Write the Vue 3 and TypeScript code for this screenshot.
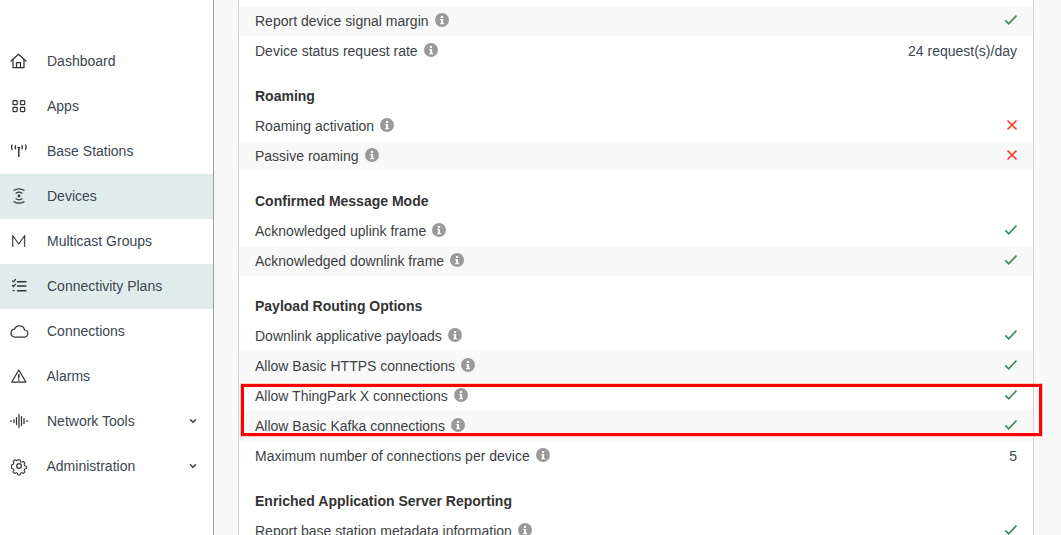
<script setup lang="ts">
interface NavItem { label: string; icon: string; active?: boolean; chevron?: boolean; tight?: boolean }
type Row = { label: string; value?: string; status?: 'ok' | 'no' }
interface Section { title?: string; rows: Row[] }

const nav: NavItem[] = [
  { label: 'Dashboard', icon: 'home' },
  { label: 'Apps', icon: 'apps' },
  { label: 'Base Stations', icon: 'antenna' },
  { label: 'Devices', icon: 'device', active: true },
  { label: 'Multicast Groups', icon: 'multicast' },
  { label: 'Connectivity Plans', icon: 'plans', active: true },
  { label: 'Connections', icon: 'cloud' },
  { label: 'Alarms', icon: 'alarm', tight: true },
  { label: 'Network Tools', icon: 'wave', chevron: true },
  { label: 'Administration', icon: 'gear', chevron: true, tight: true },
]

const sections: Section[] = [
  { rows: [
    { label: 'Report device signal margin', status: 'ok' },
    { label: 'Device status request rate', value: '24 request(s)/day' },
  ] },
  { title: 'Roaming', rows: [
    { label: 'Roaming activation', status: 'no' },
    { label: 'Passive roaming', status: 'no' },
  ] },
  { title: 'Confirmed Message Mode', rows: [
    { label: 'Acknowledged uplink frame', status: 'ok' },
    { label: 'Acknowledged downlink frame', status: 'ok' },
  ] },
  { title: 'Payload Routing Options', rows: [
    { label: 'Downlink applicative payloads', status: 'ok' },
    { label: 'Allow Basic HTTPS connections', status: 'ok' },
    { label: 'Allow ThingPark X connections', status: 'ok' },
    { label: 'Allow Basic Kafka connections', status: 'ok' },
    { label: 'Maximum number of connections per device', value: '5' },
  ] },
  { title: 'Enriched Application Server Reporting', rows: [
    { label: 'Report base station metadata information', status: 'ok' },
  ] },
]

const striped = (s: Section, i: number) => (s.title ? i % 2 === 1 : i % 2 === 0)
</script>

<template>
  <div class="page">
    <aside class="sidebar">
      <div v-for="item in nav" :key="item.label" class="nav-item" :class="{ active: item.active, tight: item.tight }">
        <svg class="nav-icon" viewBox="0 0 20 20" fill="none" stroke="currentColor" stroke-width="1.250" stroke-linecap="round" stroke-linejoin="round">
          <template v-if="item.icon === 'home'">
            <path d="M2 10 9.500 3.200 17 10" /><path d="M4 8.500V16.500h11V8.500" /><path d="M7.500 16.500V11.500h4v5" />
          </template>
          <template v-else-if="item.icon === 'apps'">
            <rect x="4" y="4.500" width="4.200" height="4.200" rx=".8" /><rect x="11.500" y="4.500" width="4.200" height="4.200" rx=".8" />
            <rect x="4" y="11.300" width="4.200" height="4.200" rx=".8" /><rect x="11.500" y="11.300" width="4.200" height="4.200" rx=".8" />
          </template>
          <template v-else-if="item.icon === 'antenna'">
            <path d="M9.800 6.500V15.500" stroke-width="1.500" /><path d="M8.800 6.500h2" />
            <path d="M6.500 4.800c-.4 1-.4 2 0 3M13 4.800c.4 1 .4 2 0 3M3 4c-.8 1.500-.8 3 0 4.500M16.600 4c.8 1.500.8 3 0 4.500" stroke-width="1.400" />
          </template>
          <template v-else-if="item.icon === 'device'">
            <circle cx="10" cy="10" r=".8" />
            <path d="M7 7.200c2-1.300 4-1.300 6 0M5 4.300c3.300-2 6.700-2 10 0M7 12.800c2 1.300 4 1.300 6 0M5 15.700c3.300 2 6.700 2 10 0" />
          </template>
          <template v-else-if="item.icon === 'multicast'">
            <path d="M3.700 15.500V4.500l6 8.500 6-8.500V15.500" stroke-width="1.100" />
          </template>
          <template v-else-if="item.icon === 'plans'">
            <path d="M3.500 4.800 4.500 5.800 6.500 3.500M3.500 9.500 4.500 10.500 6.500 8.200M4 14.700h1" stroke-width="1.200" /><path d="M8.500 5.700h8.500M8.500 10h8.500M8.500 14.700h8.500" stroke-width="1.400" />
          </template>
          <template v-else-if="item.icon === 'cloud'">
            <path d="M5.200 16h9.800a3.500 3.500 0 0 0 .6-7A5.300 5.300 0 0 0 5.500 8.200 3.950 3.950 0 0 0 5.200 16Z" />
          </template>
          <template v-else-if="item.icon === 'alarm'">
            <path d="M9.800 4 16.800 16H2.800Z" /><path d="M9.800 8.500v3.500M9.800 14v.2" stroke-width="1.500" />
          </template>
          <template v-else-if="item.icon === 'wave'">
            <path d="M1.500 10h1M5 8.500v3M7.500 6.500v7M10 3.500v13M12.500 5.500v9M15 7.500v5M17.500 10h1" />
          </template>
          <template v-else>
            <circle cx="10" cy="10" r="2.300" />
            <path d="M8.700 2.800h2.600l.5 2.100 1.500.7 1.900-1 1.800 1.800-1 1.900.7 1.500 2 .6v2.600l-2 .6-.7 1.500 1 1.900-1.800 1.800-1.900-1-1.500.7-.5 2H8.700l-.5-2-1.500-.7-1.900 1-1.800-1.800 1-1.900-.7-1.500-2-.6V8.500l2-.6.7-1.500-1-1.900 1.800-1.800 1.900 1 1.500-.7Z" transform="translate(1.500 1.500) scale(.85)" />
          </template>
        </svg>
        <span class="nav-label">{{ item.label }}</span>
        <svg v-if="item.chevron" class="chevron" viewBox="0 0 10 10" fill="none" stroke="currentColor" stroke-width="1.600" stroke-linecap="round" stroke-linejoin="round">
          <path d="M2.500 3.800 5 6.300l2.500-2.500" />
        </svg>
      </div>
    </aside>
    <main class="content">
      <div class="card">
        <section v-for="(section, sIndex) in sections" :key="sIndex" class="section">
          <div v-if="section.title" class="heading">{{ section.title }}</div>
          <div v-for="(row, i) in section.rows" :key="row.label" class="row" :class="{ striped: striped(section, i) }">
            <span class="row-label">{{ row.label }}</span>
            <svg class="info" viewBox="0 0 14 14">
              <circle cx="7" cy="7" r="7" fill="#9a9a9a" />
              <rect x="5.900" y="3" width="2.200" height="2" fill="#fff" />
              <path d="M5.300 6h2.800v4h.9v1.200H5.200V10h.9V7.200h-.8Z" fill="#fff" />
            </svg>
            <span v-if="row.value" class="value">{{ row.value }}</span>
            <svg v-else-if="row.status === 'ok'" class="status" viewBox="0 0 14 12" fill="none" stroke="#3d8b5a" stroke-width="1.700">
              <path d="M2.300 6.300 5.700 9.800 13.500 1.500" />
            </svg>
            <svg v-else class="status" viewBox="0 0 14 12" fill="none" stroke="#f4412d" stroke-width="1.700">
              <path d="M4.500 1.500l9 9M13.500 1.500l-9 9" />
            </svg>
          </div>
        </section>
      </div>
    </main>
    <div class="highlight"></div>
  </div>
</template>

<style>
html, body { margin: 0; background: #fff; overflow: hidden; }
</style>

<style scoped>
.page {
  position: relative;
  display: flex;
  width: 1061px;
  height: 535px;
  overflow: hidden;
  font-family: "Liberation Sans", Arial, sans-serif;
  font-size: 14px;
  color: #3c4650;
}
.sidebar {
  box-sizing: border-box;
  flex: 0 0 214px;
  height: 100%;
  padding-top: 39px;
  background: #fff;
  border-right: 1px solid #9e9e9e;
}
.nav-item {
  box-sizing: border-box;
  display: flex;
  align-items: center;
  height: 45px;
  padding: 0 15px 2px 9px;
}
.nav-item.active { background: #e0ecec; }
.nav-icon {
  flex: none;
  width: 20px;
  height: 20px;
  margin-right: 18px;
  color: #333;
}
.nav-label { flex: 1; }
.nav-item.tight .nav-label { margin-left: -0.5px; }
.chevron { flex: none; width: 10px; height: 10px; color: #444; }
.content {
  flex: 1;
  min-width: 0;
  padding: 0 27px 0 24px;
  background: #f9f9f9;
}
.card {
  box-sizing: border-box;
  min-height: 100%;
  padding-top: 6px;
  background: #fff;
  border: solid #d4d4d4;
  border-width: 0 1px;
}
.section { margin-bottom: 15px; }
.heading {
  height: 30px;
  padding: 0 16px;
  line-height: 30px;
  font-weight: 700;
  color: #333;
}
.row {
  display: flex;
  align-items: center;
  height: 30px;
  padding: 0 16px;
}
.row.striped { background: #f8f8f8; }
.row-label { color: #3c3f44; }
.info { flex: none; width: 14px; height: 14px; margin-left: 6px; margin-bottom: 2px; }
.value { margin-left: auto; }
.status { flex: none; width: 14px; height: 12px; margin-left: auto; margin-bottom: 2px; }
.highlight {
  position: absolute;
  left: 241px;
  top: 384px;
  width: 801px;
  height: 52px;
  box-sizing: border-box;
  border: 3px solid #f00;
  box-shadow: 0 0 0 1px rgba(255, 0, 0, 0.2);
  pointer-events: none;
}
</style>
